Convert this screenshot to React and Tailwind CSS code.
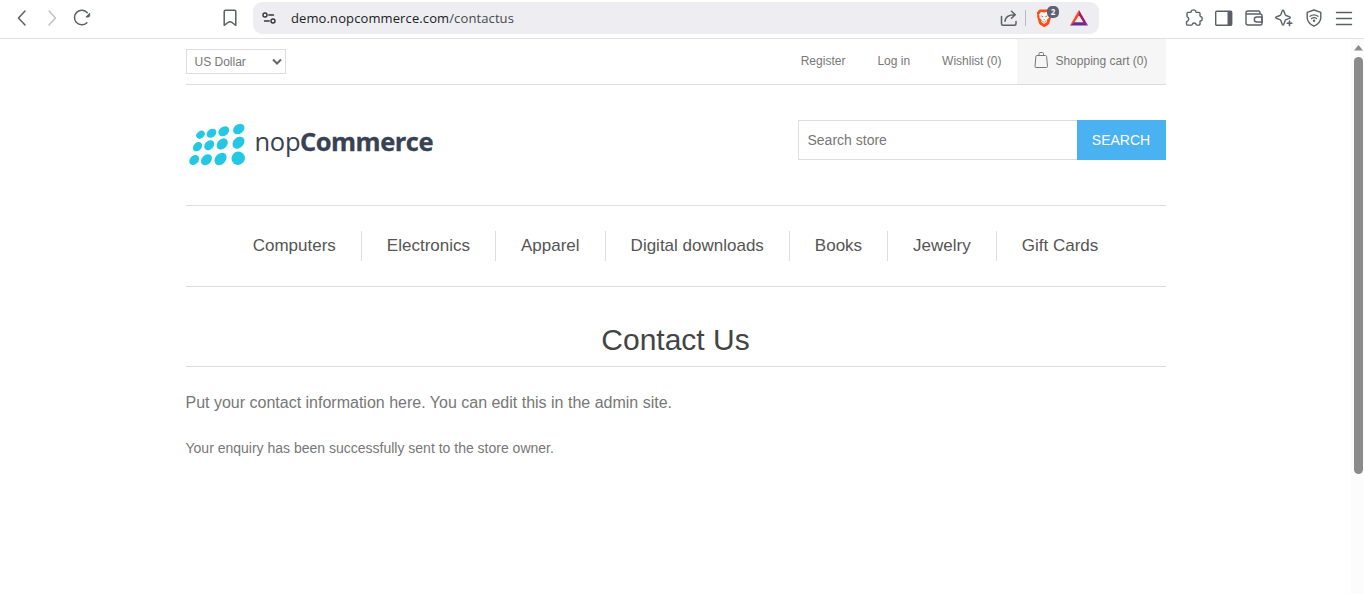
import React from "react";

const ink = "#5b5f66";

function Icon({ w = 20, h = 20, className = "", color = ink, sw = 1.5, children }) {
  return (
    <svg
      width={w}
      height={h}
      viewBox={`0 0 ${w} ${h}`}
      className={`block shrink-0 ${className}`}
      fill="none"
      stroke={color}
      strokeWidth={sw}
      strokeLinecap="round"
      strokeLinejoin="round"
    >
      {children}
    </svg>
  );
}

function BrowserBar() {
  return (
    <header className="flex h-[39px] shrink-0 items-start border-b border-[#e1e1e3] bg-white">
      <div className="flex h-9 items-center pl-3">
        <Icon><path d="M13 3 6.5 10 13 17" /></Icon>
        <Icon className="ml-2.5" color="#c0c2c5"><path d="M7 3l6.500 7L7 17" /></Icon>
        <Icon className="ml-2.5">
          <path d="M14.900 14.700A7.300 7.300 0 1 1 15.300 4.700" />
          <path d="M17.700 5.600v1.700a1.700 1.700 0 0 1-1.700 1.700h-1.700z" fill={ink} strokeWidth="1" />
        </Icon>
        <Icon className="ml-32" sw={1.5}>
          <path d="M4.200 3.500a1.200 1.200 0 0 1 1.200-1.200h9.200a1.200 1.200 0 0 1 1.200 1.200V17.300l-3.800-2.800c-1.200-.9-2.800-.9-4 0l-3.800 2.800z" />
        </Icon>
      </div>
      <div className="mt-0.5 ml-[13px] flex h-8 w-[846px] items-center rounded-[9px] bg-[#ededf2] pl-[7px]">
        <Icon w={18} h={18} color="#33363b" sw={1.4}>
          <circle cx="5" cy="6" r="2" /><path d="M8.800 6H13.500" />
          <circle cx="13" cy="12" r="2" /><path d="M4.500 12h4.700" />
        </Icon>
        <span className="ml-[13px] font-['Open_Sans','Noto_Sans',sans-serif] text-[13px] leading-8 tracking-[0.11px] whitespace-nowrap text-[#202124]">
          demo.nopcommerce.com<span className="text-[#46484d]">/contactus</span>
        </span>
        <div className="ml-auto flex h-8 items-center pr-2.5">
          <Icon color={ink}>
            <path d="M2.500 8.500v7.200A1.500 1.500 0 0 0 4 17.200h11.500A1.500 1.500 0 0 0 17 15.700V13.500" />
            <path d="M6 13.200c.3-4.200 3.200-6.500 9.800-6.500M12.500 3.200l3.800 3.500-3.800 3.500" />
          </Icon>
          <span className="ml-[6px] h-4 w-px bg-[#b9bac0]" />
          <span className="relative ml-[9px] block h-5 w-5">
            <svg width="20" height="20" viewBox="0 0 20 20" className="block">
              <path d="M4.600 1.500h9.300l1.400 1.700 1.300 1.600-.6 2.100.4 1.400-2 6.600c-.3 1.100-.8 1.700-1.700 2.300L9.200 19.200l-3.600-2.100c-.9-.6-1.400-1.200-1.700-2.200L2 8.300l.4-1.400-.7-2.100 1.500-1.700z" fill="#fb4f15" />
              <path d="M9.200 4.500 12.500 4l2 2.700-.8 1.400.4 1.400-2.500 2.700.6 1.500-3 2.300-3-2.300.6-1.500-2.500-2.700.4-1.400-.8-1.400L5.900 4z" fill="#fff" />
              <path d="M5.600 7.300l2.600.9-.7 1.300zM12.800 7.300l-2.600.9.7 1.300zM8.300 11.500h1.800l-.9 1z" fill="#fb4f15" />
              <path d="M7.300 13.300l1.900 1 1.900-1" stroke="#fb4f15" strokeWidth=".7" fill="none" />
            </svg>
            <span className="absolute -top-0.5 left-3 flex h-3 w-3 items-center justify-center rounded-[5px] bg-[#5f6272] font-['Open_Sans',sans-serif] text-[8px] leading-none font-bold text-white">
              2
            </span>
          </span>
          <svg width="20" height="18" viewBox="0 0 20 18" className="ml-3.5 block">
            <path d="M10 1 1 16.500l4.400-2.700L10 6.200z" fill="#ff4724" />
            <path d="M10 1l9 15.500-4.400-2.700L10 6.200z" fill="#9e1f63" />
            <path d="M1 16.500h18l-4.400-3.200H5.400z" fill="#662d91" />
          </svg>
        </div>
      </div>
      <div className="ml-auto flex h-9 items-center gap-2.5 pr-2.5">
        <Icon sw={1.4}>
          <path d="M3 5.600A1.200 1.200 0 0 1 4.200 4.400h2.300c.4 0 .6-.3.600-.7.200-2.500 4.600-2.500 4.800 0 0 .4.200.7.600.7h2.300A1.200 1.200 0 0 1 16 5.600v2.200c0 .4.300.6.600.7 2.200.5 2.200 4 0 4.500-.3.100-.6.300-.6.700v2.200a1.200 1.200 0 0 1-1.200 1.200h-1.900c-.4 0-.6-.3-.7-.6-.5-2-3.500-2-4 0-.1.300-.3.600-.7.600H3.700a1.200 1.200 0 0 1-1.200-1.200v-1.900c0-.4.3-.6.600-.7 2.100-.6 2.100-3.400.4-4.200-.3-.2-.5-.4-.5-.8z" />
        </Icon>
        <Icon sw={1.4}>
          <rect x="1.700" y="3.200" width="16" height="14" rx="1" />
          <path d="M13.500 3h4.200v14.200h-4.200z" fill={ink} stroke="none" />
        </Icon>
        <Icon sw={1.4}>
          <path d="M16 6V4.400A1.400 1.400 0 0 0 14.600 3H4a2 2 0 0 0-2 2v10a2 2 0 0 0 2 2h12.200a1.800 1.800 0 0 0 1.800-1.800V7.800A1.800 1.800 0 0 0 16.200 6H2.300" />
          <path d="M18 9h-5.200a2.500 2.500 0 0 0 0 5H18z" />
        </Icon>
        <Icon sw={1.4}>
          <path d="M9 2.300c.4 0 .6.200.8.700l1.300 3.500c.2.500.5.800 1 1l3.500 1.300c1 .4 1 1.200 0 1.600l-3.500 1.300c-.5.200-.8.500-1 1L9.800 16.200c-.4 1-1.200 1-1.600 0l-1.300-3.500c-.2-.5-.5-.8-1-1L2.400 10.400c-1-.4-1-1.200 0-1.600l3.500-1.300c.5-.2.800-.5 1-1L8.200 3c.2-.5.4-.7.800-.7z" />
          <path d="M15.500 13v4.600M13.200 15.300h4.600" stroke="#fff" strokeWidth="3.500" />
          <path d="M15.500 13v4.600M13.200 15.300h4.600" strokeWidth="1.600" />
        </Icon>
        <Icon sw={1.4}>
          <path d="M10 2l6.800 2.300v5.200c0 4-2.700 6.700-6.800 8.700-4.100-2-6.800-4.700-6.800-8.700V4.300z" />
          <path d="M6 8.300c2.400-1.800 5.600-1.800 8 0M7.500 10.600c1.500-1.100 3.500-1.100 5 0" strokeWidth="1.300" />
          <circle cx="10" cy="12.700" r="1.200" fill={ink} stroke="none" />
        </Icon>
        <Icon sw={1.4}><path d="M2.500 4.500h15M2.500 10.500h15M2.500 16.500h15" /></Icon>
      </div>
    </header>
  );
}

// [centre x, centre y, mean radius]
const dots = [
  [14.500, 14.700, 4.100], [25.500, 13.300, 4.700], [37.800, 11.300, 5.200], [52.800, 9, 5.500],
  [11.500, 26.700, 4.600], [23.200, 25.300, 5], [36.200, 24, 5.600], [52.500, 22.700, 6],
  [8.200, 40, 5], [20.500, 39.700, 5.500], [34.500, 39, 6.100], [52.200, 38.300, 6.700],
];

function Logo() {
  return (
    <svg width="252" height="50" viewBox="0 0 252 50" className="block" aria-label="nopCommerce">
      {dots.map(([x, y, r], i) => (
        <ellipse
          key={i}
          cx={x}
          cy={y}
          rx={r * (i === 11 ? 1.020 : 1.130)}
          ry={r * (i === 11 ? 0.980 : 0.860)}
          fill="#25c8e2"
          transform={`rotate(${i < 4 ? -38 : -46} ${x} ${y})`}
        />
      ))}
      <g fill="#384252" fontFamily="'Open Sans','Noto Sans',sans-serif">
        <text x="68.500" y="31.300" fontSize="25.500" textLength="46" lengthAdjust="spacing">nop</text>
        <text x="114" y="31.300" fontSize="25.500" fontWeight="700" stroke="#384252" strokeWidth=".3" textLength="133.500" lengthAdjust="spacing">Commerce</text>
      </g>
    </svg>
  );
}

const categories = ["Computers", "Electronics", "Apparel", "Digital downloads", "Books", "Jewelry", "Gift Cards"];

function Store() {
  return (
    <main className="mx-auto w-[980px] text-[#777]">
      <div className="flex h-[46px] items-stretch justify-between border-b border-[#ddd] text-xs">
        <button className="mt-2.5 flex h-[25px] w-[100px] items-center justify-between border border-[#ddd] pr-[3px] pl-2">
          US Dollar
          <svg width="10" height="8" viewBox="0 0 10 8" fill="none" stroke="#666" strokeWidth="2">
            <path d="M1 1.500l4 4 4-4" />
          </svg>
        </button>
        <nav className="flex items-stretch leading-[44px]">
          <a className="mr-8">Register</a>
          <a className="mr-8">Log in</a>
          <a className="mr-4">Wishlist (0)</a>
          <a className="flex bg-[#f6f6f6] pr-[18px] pl-[17px]">
            <svg width="14" height="18" viewBox="0 0 14 18" className="mt-3 mr-[7px] block" fill="none" stroke="#777" strokeWidth="1">
              <path d="M3 4.500h8.500c.7 0 1 .5 1.100 1l.9 10c0 .8-.4 1-1 1H2c-.6 0-1-.2-1-1l.9-10c.1-.5.4-1 1.100-1zM5 5V2.500c0-.6.400-1 1-1h2.500c.6 0 1 .4 1 1V5" />
            </svg>
            Shopping cart (0)
          </a>
        </nav>
      </div>
      <div className="flex h-[120px] items-start justify-between pt-[35px]">
        <Logo />
        <form className="flex h-10 text-sm">
          <span className="w-[279px] border border-r-0 border-[#ddd] pl-[9px] leading-[38px]">Search store</span>
          <span className="w-[89px] bg-[#4ab2f1] text-center leading-10 text-white">SEARCH</span>
        </form>
      </div>
      <nav className="flex h-[82px] items-center justify-center border-y border-[#ddd] text-[17px] text-[#555]">
        {categories.map((name, i) => (
          <a key={name} className={`h-[30px] px-[25px] leading-[29px] whitespace-nowrap ${i < 6 ? "border-r border-[#ddd]" : ""}`}>
            {name}
          </a>
        ))}
      </nav>
      <h1 className="h-20 border-b border-[#ddd] pt-[31px] text-center text-[30px] leading-[44px] text-[#444]">Contact Us</h1>
      <p className="mt-5 text-base leading-8">Put your contact information here. You can edit this in the admin site.</p>
      <p className="mt-[15px] text-sm leading-7">Your enquiry has been successfully sent to the store owner.</p>
    </main>
  );
}

export default function App() {
  return (
    <div className="flex h-[594px] w-[1364px] flex-col overflow-hidden bg-white font-['Liberation_Sans',Arial,sans-serif]">
      <BrowserBar />
      <div className="flex min-h-0 flex-1">
        <div className="flex-1"><Store /></div>
        <div className="flex w-[13px] flex-col items-center bg-[#fcfcfc] pt-1.5 pl-[2px]">
          <svg width="9" height="6" viewBox="0 0 9 6" className="block"><path d="M0 5.500 4.500 0 9 5.500z" fill="#8b8b8b" /></svg>
          <div className="mt-1.5 h-[417px] w-[9px] rounded-full bg-[#8b8b8b]" />
        </div>
      </div>
    </div>
  );
}
